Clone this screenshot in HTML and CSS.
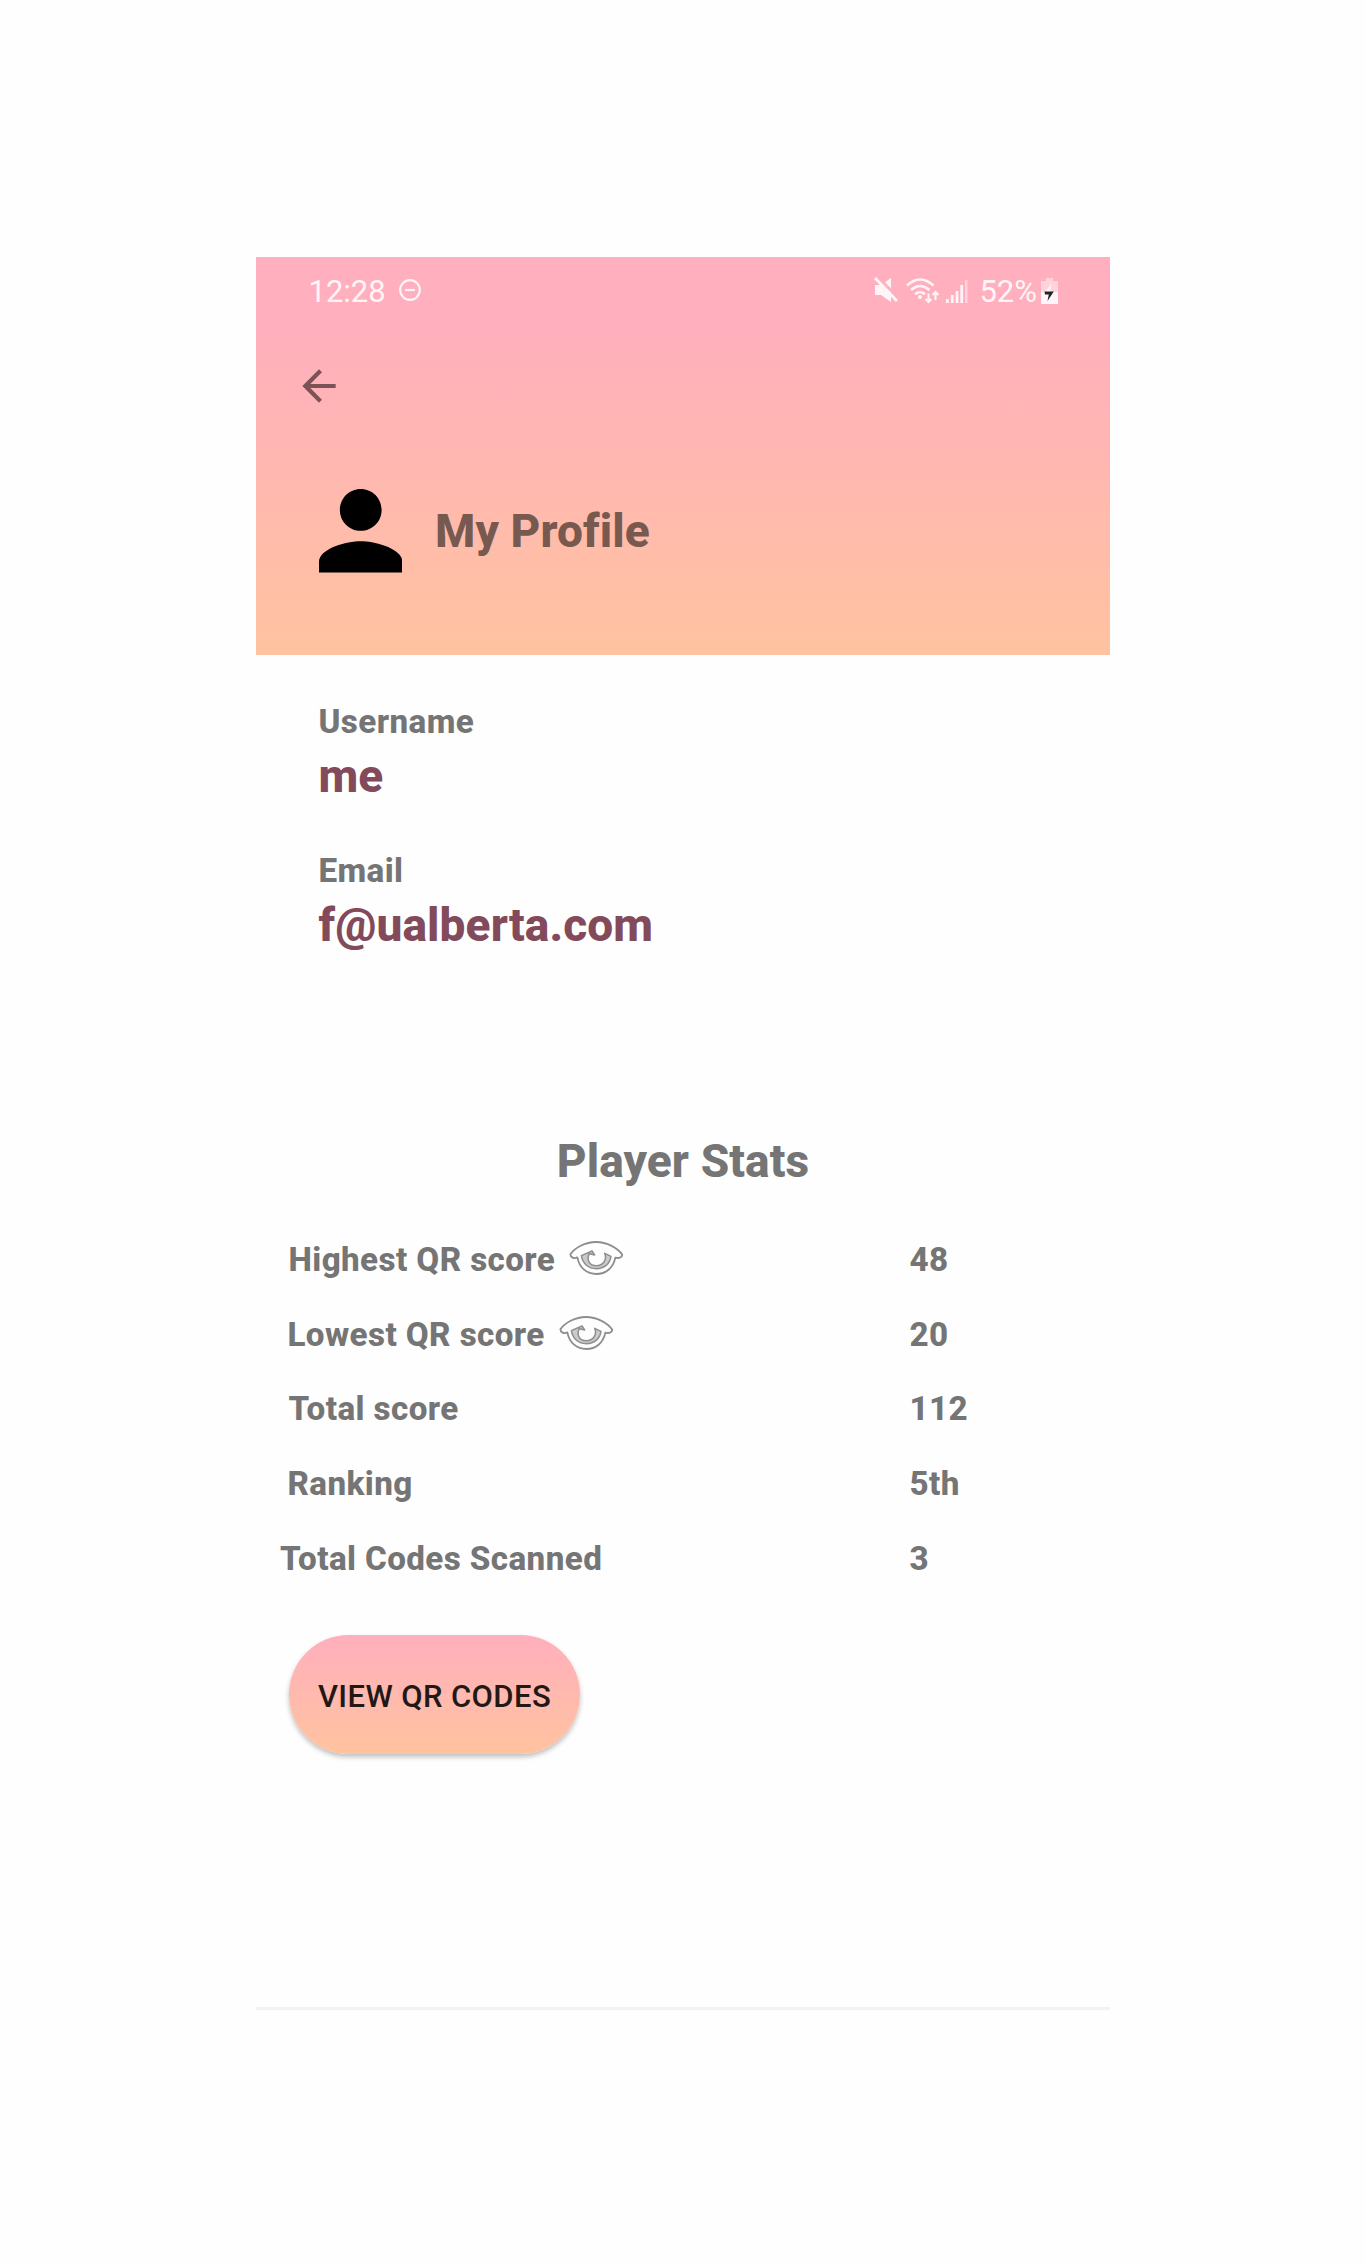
FILE: index.html
```html
<!DOCTYPE html>
<html lang="en">
<head>
<meta charset="utf-8">
<title>My Profile</title>
<link rel="stylesheet" href="styles.css">
</head>
<body>
<svg width="0" height="0" class="defs" aria-hidden="true">
  <symbol id="eye" viewBox="88 360 164 106">
    <g fill="none" stroke="#8e8e8e" stroke-width="5.5" stroke-linejoin="round">
      <path d="M92 403C105 384 136 366 169 366S234 384 248 404C247 412 240 416 227 413C221 444 198 462 170 462S119 444 113 412C103 418 92 412 92 403Z"/>
      <path d="M125 407L157 393L165 405L149 401C139 420 150 437 170 437S203 420 195 400L214 409C211 432 193 446 170 446S129 432 125 407Z" fill="#cacaca" stroke-width="4.500"/>
    </g>
  </symbol>
</svg>
<main class="screen">
  <header class="header">
    <div class="status">
      <span class="clock">12:28</span>
      <svg class="dnd" viewBox="0 0 22 22"><circle cx="11" cy="11" r="9.8"/><path d="M6 11H16"/></svg>
      <div class="indicators">
        <svg class="mute" viewBox="0 0 24 26"><path d="M1 8H7L17 1V25L7 18H1Z" fill="#fff5f8"/><path d="M3 -1L25 22" stroke="#ffafbd" stroke-width="3"/><path d="M1 1L23 24" stroke="#fff5f8" stroke-width="3"/></svg>
        <svg class="wifi" viewBox="0 0 34 26"><g fill="none" stroke="#fff5f8" stroke-width="2.6"><path d="M1 7.500Q14 -4.500 27.500 7.500M5 12Q14 4 23.500 12M9 16.300Q14 12 19 16.300"/><path d="M22.500 15.500V24M19.500 21L22.500 24L25.500 21M29.500 22V14M26.500 17L29.500 14L32.500 17" stroke-width="2.100"/></g><circle cx="14" cy="19" r="2" fill="#fff5f8"/></svg>
        <svg class="signal" viewBox="0 0 22 24"><path d="M0 20h2.800v4H0zM4.800 16h2.800v8H4.800zM9.600 12h2.800v12H9.600zM14.300 6h2.800v18h-2.800z" fill="#fff5f8"/><path d="M19 1h2.500v23H19z" fill="#ffd3dc"/></svg>
        <span class="percent">52%</span>
        <svg class="battery" viewBox="0 0 17 26"><path d="M5 0h7v3h5v11H0V3h5z" fill="#ffd3dc"/><path d="M0 14h17v12H0z" fill="#fff5f8"/><path d="M10.500 6L4 14H12.500L9 13Z" fill="#fff5f8"/><path d="M3.500 13.500H12.800L6.500 23L7.800 16.500H4Z" fill="#222"/></svg>
      </div>
    </div>
    <svg class="back" viewBox="0 0 24 24"><path d="M20 11H7.830l5.590-5.590L12 4l-8 8 8 8 1.410-1.410L7.830 13H20v-2z"/></svg>
    <div class="title">
      <svg class="person" viewBox="4 4 16 16"><path d="M12 12c2.210 0 4-1.790 4-4s-1.790-4-4-4-4 1.790-4 4 1.790 4 4 4zm0 2c-2.670 0-8 1.340-8 4v2h16v-2c0-2.660-5.330-4-8-4z"/></svg>
      <h1>My Profile</h1>
    </div>
  </header>
  <dl class="account">
    <dt>Username</dt><dd>me</dd>
    <dt>Email</dt><dd>f@ualberta.com</dd>
  </dl>
  <h2>Player Stats</h2>
  <div class="stats">
    <div class="row highest"><span>Highest QR score</span><svg class="eye"><use href="#eye"/></svg><b>48</b></div>
    <div class="row lowest"><span>Lowest QR score</span><svg class="eye"><use href="#eye"/></svg><b>20</b></div>
    <div class="row total"><span>Total score</span><b>112</b></div>
    <div class="row ranking"><span>Ranking</span><b>5th</b></div>
    <div class="row scanned"><span>Total Codes Scanned</span><b>3</b></div>
  </div>
  <button class="view">VIEW QR CODES</button>
</main>
</body>
</html>
```
FILE: styles.css
```css
* { box-sizing: border-box; }
body {
  margin: 0;
  padding-top: 257px;
  min-height: 2265px;
  background: #fefefe;
  font-family: Roboto, "Liberation Sans", sans-serif;
  color: #757575;
}
svg { display: block; flex: none; }
.defs { position: absolute; }
.screen {
  width: 854px;
  height: 1753px;
  margin-left: 256px;
  border-bottom: 3px solid #f3f3f3;
}
.header {
  height: 398px;
  padding-top: 15px;
  background: linear-gradient(#ffafbd, #ffafbd 18%, #ffc3a0);
}
.status {
  display: flex;
  height: 40px;
  padding-left: 52.500px;
  padding-right: 52px;
  font-size: 31px;
  line-height: 40px;
  color: #fff5f8;
}
.dnd {
  width: 22px;
  height: 22px;
  margin: 7px 0 0 13.500px;
  fill: none;
  stroke: #fff5f8;
  stroke-width: 2.2;
}
.indicators { display: flex; margin-left: auto; }
.mute { width: 24px; height: 26px; margin: 5px 8px 0 0; }
.wifi { width: 34px; height: 26px; margin: 6px 6px 0 0; }
.signal { width: 22px; height: 24px; margin: 7px 11px 0 0; }
.battery { width: 17px; height: 26px; margin: 6px 0 0 4px; }
.back { width: 50px; height: 50px; margin: 49px 0 0 38px; fill: #7b5356; }
.title { display: flex; align-items: center; margin: 78px 0 0 62.500px; }
.person { width: 83.500px; height: 83.500px; }
h1, h2 { margin: 0; font-size: 46px; font-weight: 800; line-height: 54px; letter-spacing: .1px; }
h1 { margin-left: 33px; color: #78594f; }
.account { margin: 46px 0 0 62.500px; font-weight: 800; }
.account dt { font-size: 33.2px; line-height: 42px; letter-spacing: .4px; }
.account dd { margin: 0 0 41px; font-size: 46px; line-height: 66px; letter-spacing: .1px; color: #834a5b; }
h2 { margin-top: 176px; text-align: center; }
.stats { margin-top: 35px; font-size: 33.2px; font-weight: 800; letter-spacing: .4px; }
.row {
  display: grid;
  grid-template-columns: auto 1fr 200.500px;
  height: 74.7px;
  line-height: 74px;
}
.row b { grid-column: 3; font-weight: 800; }
.highest, .total { padding-left: 32.500px; }
.lowest, .ranking { padding-left: 31.500px; }
.scanned { padding-left: 24px; }
.eye { width: 54.700px; height: 35.300px; margin: 17px 0 0 14px; }
.view {
  display: block;
  width: 291px;
  height: 119px;
  margin: 39px 0 0 33px;
  padding: 4px 0 0;
  border: 0;
  border-radius: 60px;
  background: linear-gradient(#ffafbd, #ffc3a0);
  box-shadow: 0 3px 5px rgba(0, 0, 0, .25);
  font: 500 31px/115px Roboto, "Liberation Sans", sans-serif;
  letter-spacing: .4px;
  color: #231815;
}
```
